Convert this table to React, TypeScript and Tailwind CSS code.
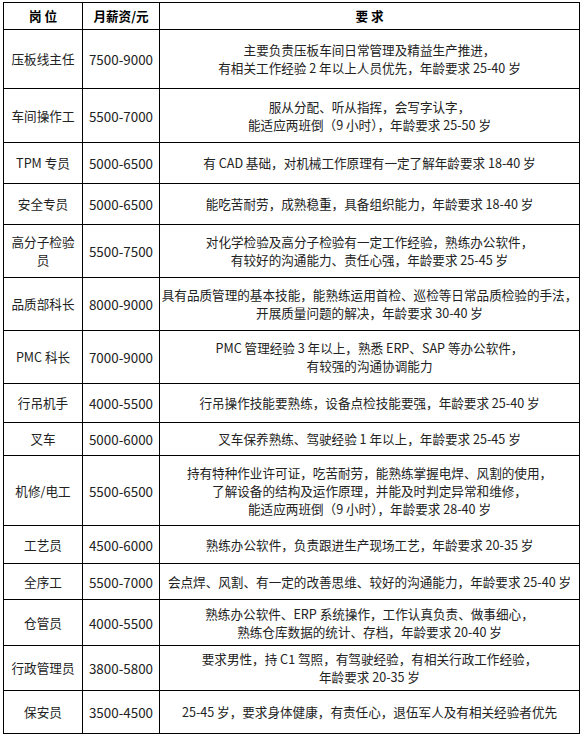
import React from "react"

type Row = { title: string[]; pay: string; req: string[]; h: number }

const rows: Row[] = [
  { title: ["压板线主任"], pay: "7500-9000", h: 59, req: ["主要负责压板车间日常管理及精益生产推进，", "有相关工作经验 2 年以上人员优先，年龄要求 25-40 岁"] },
  { title: ["车间操作工"], pay: "5500-7000", h: 54, req: ["服从分配、听从指挥，会写字认字，", "能适应两班倒（9 小时），年龄要求 25-50 岁"] },
  { title: ["TPM 专员"], pay: "5000-6500", h: 41, req: ["有 CAD 基础，对机械工作原理有一定了解年龄要求 18-40 岁"] },
  { title: ["安全专员"], pay: "5000-6500", h: 41, req: ["能吃苦耐劳，成熟稳重，具备组织能力，年龄要求 18-40 岁"] },
  { title: ["高分子检验", "员"], pay: "5500-7500", h: 53, req: ["对化学检验及高分子检验有一定工作经验，熟练办公软件，", "有较好的沟通能力、责任心强，年龄要求 25-45 岁"] },
  { title: ["品质部科长"], pay: "8000-9000", h: 53, req: ["具有品质管理的基本技能，能熟练运用首检、巡检等日常品质检验的手法，", "开展质量问题的解决，年龄要求 30-40 岁"] },
  { title: ["PMC 科长"], pay: "7000-9000", h: 53, req: ["PMC 管理经验 3 年以上，熟悉 ERP、SAP 等办公软件，", "有较强的沟通协调能力"] },
  { title: ["行吊机手"], pay: "4000-5500", h: 39, req: ["行吊操作技能要熟练，设备点检技能要强，年龄要求 25-40 岁"] },
  { title: ["叉车"], pay: "5000-6000", h: 33, req: ["叉车保养熟练、驾驶经验 1 年以上，年龄要求 25-45 岁"] },
  { title: ["机修/电工"], pay: "5500-6500", h: 70, req: ["持有特种作业许可证，吃苦耐劳，能熟练掌握电焊、风割的使用，", "了解设备的结构及运作原理，并能及时判定异常和维修，", "能适应两班倒（9 小时），年龄要求 28-40 岁"] },
  { title: ["工艺员"], pay: "4500-6000", h: 38, req: ["熟练办公软件，负责跟进生产现场工艺，年龄要求 20-35 岁"] },
  { title: ["全序工"], pay: "5500-7000", h: 36, req: ["会点焊、风割、有一定的改善思维、较好的沟通能力，年龄要求 25-40 岁"] },
  { title: ["仓管员"], pay: "4000-5500", h: 46, req: ["熟练办公软件、ERP 系统操作，工作认真负责、做事细心，", "熟练仓库数据的统计、存档，年龄要求 20-40 岁"] },
  { title: ["行政管理员"], pay: "3800-5800", h: 45, req: ["要求男性，持 C1 驾照，有驾驶经验，有相关行政工作经验，", "年龄要求 20-35 岁"] },
  { title: ["保安员"], pay: "3500-4500", h: 43, req: ["25-45 岁，要求身体健康，有责任心，退伍军人及有相关经验者优先"] },
]

function Lines({ items }: { items: string[] }) {
  return (
    <>
      {items.map((t, i) => (
        <div key={i} className="whitespace-nowrap">
          {t}
        </div>
      ))}
    </>
  )
}

export default function App() {
  return (
    <div className="min-h-[737px] w-[584px] bg-white pl-[3px] pt-[2px] font-['Noto_Sans_CJK_SC',sans-serif] text-[12.6px] leading-[18px] text-[#222]">
      <table className="w-[576px] table-fixed border-collapse border border-black">
        <colgroup>
          <col className="w-[79px]" />
          <col className="w-[77px]" />
          <col className="w-[420px]" />
        </colgroup>
        <thead>
          <tr className="h-[27px] font-bold text-black">
            <th className="border border-black p-0 text-center">岗&nbsp;位</th>
            <th className="border border-black p-0 text-center">月薪资/元</th>
            <th className="border border-black p-0 text-center">要&nbsp;求</th>
          </tr>
        </thead>
        <tbody>
          {rows.map((r) => (
            <tr key={r.title.join("") + r.pay} style={{ height: r.h }}>
              <td className="border border-black p-0 text-center align-middle">
                <Lines items={r.title} />
              </td>
              <td className="border border-black p-0 text-center align-middle text-[13.4px]">{r.pay}</td>
              <td className="border border-black p-0 text-center align-middle">
                <Lines items={r.req} />
              </td>
            </tr>
          ))}
        </tbody>
      </table>
    </div>
  )
}
